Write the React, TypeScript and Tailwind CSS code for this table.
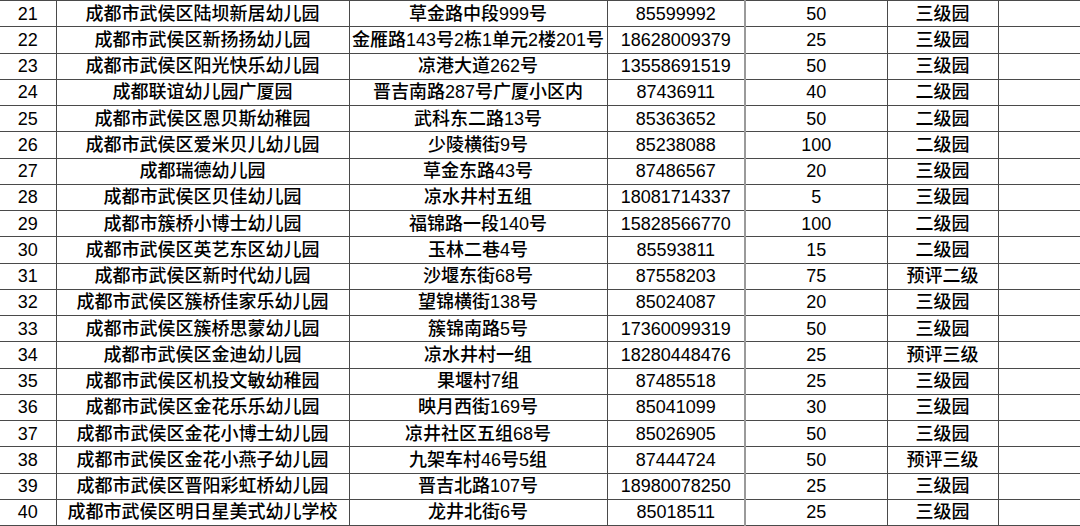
const rows: [string, string, string, string, string, string][] = [
  ["21", "成都市武侯区陆坝新居幼儿园", "草金路中段999号", "85599992", "50", "三级园"],
  ["22", "成都市武侯区新扬扬幼儿园", "金雁路143号2栋1单元2楼201号", "18628009379", "25", "三级园"],
  ["23", "成都市武侯区阳光快乐幼儿园", "凉港大道262号", "13558691519", "50", "三级园"],
  ["24", "成都联谊幼儿园广厦园", "晋吉南路287号广厦小区内", "87436911", "40", "二级园"],
  ["25", "成都市武侯区恩贝斯幼稚园", "武科东二路13号", "85363652", "50", "二级园"],
  ["26", "成都市武侯区爱米贝儿幼儿园", "少陵横街9号", "85238088", "100", "二级园"],
  ["27", "成都瑞德幼儿园", "草金东路43号", "87486567", "20", "三级园"],
  ["28", "成都市武侯区贝佳幼儿园", "凉水井村五组", "18081714337", "5", "三级园"],
  ["29", "成都市簇桥小博士幼儿园", "福锦路一段140号", "15828566770", "100", "二级园"],
  ["30", "成都市武侯区英艺东区幼儿园", "玉林二巷4号", "85593811", "15", "二级园"],
  ["31", "成都市武侯区新时代幼儿园", "沙堰东街68号", "87558203", "75", "预评二级"],
  ["32", "成都市武侯区簇桥佳家乐幼儿园", "望锦横街138号", "85024087", "20", "三级园"],
  ["33", "成都市武侯区簇桥思蒙幼儿园", "簇锦南路5号", "17360099319", "50", "三级园"],
  ["34", "成都市武侯区金迪幼儿园", "凉水井村一组", "18280448476", "25", "预评三级"],
  ["35", "成都市武侯区机投文敏幼稚园", "果堰村7组", "87485518", "25", "三级园"],
  ["36", "成都市武侯区金花乐乐幼儿园", "映月西街169号", "85041099", "30", "三级园"],
  ["37", "成都市武侯区金花小博士幼儿园", "凉井社区五组68号", "85026905", "50", "三级园"],
  ["38", "成都市武侯区金花小燕子幼儿园", "九架车村46号5组", "87444724", "50", "预评三级"],
  ["39", "成都市武侯区晋阳彩虹桥幼儿园", "晋吉北路107号", "18980078250", "25", "三级园"],
  ["40", "成都市武侯区明日星美式幼儿学校", "龙井北街6号", "85018511", "25", "三级园"],
];

export default function App() {
  return (
    <div
      className="w-[1080px] h-[526px] bg-white overflow-hidden text-black"
      style={{ fontFamily: '"Liberation Sans", "Noto Sans CJK SC", sans-serif' }}
    >
      <table className="border-collapse table-fixed w-[1080px] text-[18px] leading-none font-medium">
        <colgroup>
          <col className="w-[56px]" />
          <col className="w-[293px]" />
          <col className="w-[258px]" />
          <col className="w-[138px]" />
          <col className="w-[142px]" />
          <col className="w-[111px]" />
          <col className="w-[82px]" />
        </colgroup>
        <tbody>
          {rows.map((r) => (
            <tr key={r[0]} className="h-[26.25px]">
              <td className="border-y border-r border-[#4a4a4a] text-center p-0">{r[0]}</td>
              <td className="border border-[#4a4a4a] text-center p-0 whitespace-nowrap">{r[1]}</td>
              <td className="border border-[#4a4a4a] text-center p-0 whitespace-nowrap">{r[2]}</td>
              <td className="border border-y-[#4a4a4a] border-l-[#4a4a4a] border-r-[#9a9a9a] border-r-2 text-center p-0">{r[3]}</td>
              <td className="border border-[#4a4a4a] border-l-0 text-center p-0">{r[4]}</td>
              <td className="border border-[#4a4a4a] text-center p-0">{r[5]}</td>
              <td className="border-y border-l border-r border-[#4a4a4a] border-r-[#9a9a9a] p-0"></td>
            </tr>
          ))}
        </tbody>
      </table>
    </div>
  );
}
